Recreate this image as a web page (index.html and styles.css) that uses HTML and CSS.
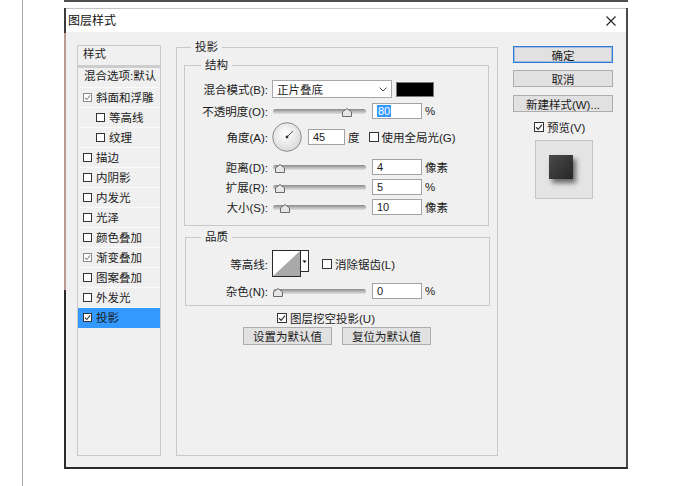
FILE: index.html
```html
<!DOCTYPE html>
<html lang="zh-CN">
<head>
<meta charset="utf-8">
<title>图层样式</title>
<link rel="stylesheet" href="styles.css">
</head>
<body>
<div class="page">
  <div class="rule"></div>
  <div class="window">
    <div class="topline"></div>
    <div class="frame">
      <div class="dialog">
        <div class="titlebar">
          <span class="title">图层样式</span>
          <svg class="close" width="10" height="10" viewBox="0 0 10 10"><path d="M0.5 0.5 L9.5 9.5 M9.5 0.5 L0.5 9.5" stroke="#222" stroke-width="1.1"/></svg>
        </div>
        <div class="body">
          <div class="list">
            <div class="list-head">样式</div>
            <div class="list-blend">混合选项:默认</div>
            <div class="item"><span class="cb cb-dis"><svg width="7" height="7" viewBox="0 0 8 8"><path d="M1 4.2 L3.2 6.3 L7 1.6" fill="none" stroke="#8a8a8a" stroke-width="1.2"/></svg></span>斜面和浮雕</div>
            <div class="item sub"><span class="cb"></span>等高线</div>
            <div class="item sub"><span class="cb"></span>纹理</div>
            <div class="item"><span class="cb"></span>描边</div>
            <div class="item"><span class="cb"></span>内阴影</div>
            <div class="item"><span class="cb"></span>内发光</div>
            <div class="item"><span class="cb"></span>光泽</div>
            <div class="item"><span class="cb"></span>颜色叠加</div>
            <div class="item"><span class="cb cb-dis"><svg width="7" height="7" viewBox="0 0 8 8"><path d="M1 4.2 L3.2 6.3 L7 1.6" fill="none" stroke="#8a8a8a" stroke-width="1.2"/></svg></span>渐变叠加</div>
            <div class="item"><span class="cb"></span>图案叠加</div>
            <div class="item"><span class="cb"></span>外发光</div>
            <div class="item selected"><span class="cb"><svg width="7" height="7" viewBox="0 0 8 8"><path d="M1 4.2 L3.2 6.3 L7 1.6" fill="none" stroke="#333" stroke-width="1.2"/></svg></span>投影</div>
          </div>

          <div class="group outer">
            <div class="legend">投影</div>

            <div class="group struct">
              <div class="legend">结构</div>
              <div class="row r-blend">
                <span class="label">混合模式(B):</span>
                <div class="select"><span>正片叠底</span><svg width="8" height="5" viewBox="0 0 8 5"><path d="M0.5 0.5 L4 4 L7.5 0.5" fill="none" stroke="#555"/></svg></div>
                <span class="swatch"></span>
              </div>
              <div class="row r-opacity">
                <span class="label">不透明度(O):</span>
                <div class="slider"><span class="track"></span><svg class="thumb" style="left:70px" width="10" height="9" viewBox="0 0 10 9"><path d="M0.5 4 L5 0.5 L9.5 4 V8.5 H0.5 Z" fill="#e6e6e6" stroke="#6a6a6a"/></svg></div>
                <span class="input"><span class="sel">80</span></span>
                <span class="unit">%</span>
              </div>
              <div class="row r-angle">
                <span class="label">角度(A):</span>
                <svg class="dial" width="30" height="30" viewBox="0 0 30 30"><defs><radialGradient id="dg" cx="45%" cy="40%" r="60%"><stop offset="0" stop-color="#ffffff"/><stop offset="1" stop-color="#dadada"/></radialGradient></defs><circle cx="15" cy="15" r="14.3" fill="url(#dg)" stroke="#8c8c8c"/><line x1="15" y1="15" x2="21" y2="9" stroke="#555" stroke-width="1"/><circle cx="15" cy="15" r="1.4" fill="#333"/></svg>
                <span class="input short">45</span>
                <span class="unit">度</span>
                <span class="check global"><span class="cb cb10"></span>使用全局光(G)</span>
              </div>
              <div class="row r-dist">
                <span class="label">距离(D):</span>
                <div class="slider"><span class="track"></span><svg class="thumb" style="left:3px" width="10" height="9" viewBox="0 0 10 9"><path d="M0.5 4 L5 0.5 L9.5 4 V8.5 H0.5 Z" fill="#e6e6e6" stroke="#6a6a6a"/></svg></div>
                <span class="input">4</span>
                <span class="unit">像素</span>
              </div>
              <div class="row r-next">
                <span class="label">扩展(R):</span>
                <div class="slider"><span class="track"></span><svg class="thumb" style="left:3px" width="10" height="9" viewBox="0 0 10 9"><path d="M0.5 4 L5 0.5 L9.5 4 V8.5 H0.5 Z" fill="#e6e6e6" stroke="#6a6a6a"/></svg></div>
                <span class="input">5</span>
                <span class="unit">%</span>
              </div>
              <div class="row r-next">
                <span class="label">大小(S):</span>
                <div class="slider"><span class="track"></span><svg class="thumb" style="left:8px" width="10" height="9" viewBox="0 0 10 9"><path d="M0.5 4 L5 0.5 L9.5 4 V8.5 H0.5 Z" fill="#e6e6e6" stroke="#6a6a6a"/></svg></div>
                <span class="input">10</span>
                <span class="unit">像素</span>
              </div>
            </div>

            <div class="group quality">
              <div class="legend">品质</div>
              <div class="row r-contour">
                <span class="label">等高线:</span>
                <svg class="contour" width="37" height="27" viewBox="0 0 37 27"><rect x="0.5" y="0.5" width="28" height="26" fill="#fff" stroke="#2a2a2a"/><polygon points="1,26 28,1 28,26" fill="#a9a9a9"/><rect x="28.5" y="0.5" width="8" height="21" fill="#fff" stroke="#2a2a2a"/><polygon points="30.5,10.5 34.5,10.5 32.5,13" fill="#000"/></svg>
                <span class="check aa"><span class="cb cb10"></span>消除锯齿(L)</span>
              </div>
              <div class="row r-noise">
                <span class="label">杂色(N):</span>
                <div class="slider"><span class="track"></span><svg class="thumb" style="left:1px" width="10" height="9" viewBox="0 0 10 9"><path d="M0.5 4 L5 0.5 L9.5 4 V8.5 H0.5 Z" fill="#e6e6e6" stroke="#6a6a6a"/></svg></div>
                <span class="input">0</span>
                <span class="unit">%</span>
              </div>
            </div>

            <div class="check knockout"><span class="cb cb10"><svg width="8" height="8" viewBox="0 0 8 8"><path d="M1 4.2 L3.2 6.3 L7 1.6" fill="none" stroke="#333" stroke-width="1.2"/></svg></span>图层挖空投影(U)</div>
            <div class="defaults">
              <span class="btn wide">设置为默认值</span>
              <span class="btn wide">复位为默认值</span>
            </div>
          </div>

          <div class="actions">
            <span class="btn primary">确定</span>
            <span class="btn cancel">取消</span>
            <span class="btn newstyle">新建样式(W)...</span>
            <span class="check preview-check"><span class="cb cb10"><svg width="8" height="8" viewBox="0 0 8 8"><path d="M1 4.2 L3.2 6.3 L7 1.6" fill="none" stroke="#333" stroke-width="1.2"/></svg></span>预览(V)</span>
            <div class="preview"><div class="shape"></div></div>
          </div>
        </div>
      </div>
    </div>
  </div>
</div>
</body>
</html>
```
FILE: styles.css
```css
* { box-sizing: border-box; }
html, body { margin: 0; padding: 0; }
body {
  background: #fff;
  width: 690px;
  height: 486px;
  overflow: hidden;
  font-family: "Liberation Sans", "Noto Sans CJK SC", sans-serif;
  font-size: 11.5px;
  color: #1b1b1b;
}
.page { display: flex; height: 486px; }
.rule { margin-left: 22px; width: 1px; background: #a9a9a9; flex: none; }
.window { margin-left: 41px; width: 564px; flex: none; }
.topline { height: 2px; background: #4f4f4f; }
.frame {
  margin-top: 6px;
  padding: 0 0 2px 2px;
  background: linear-gradient(to bottom, #3b3b3b 0, #3b3b3b 25px, #bb9b92 25px, #bb9b92 282px, #2b2b2b 282px);
}
.dialog { background: #f0f0f0; border-right: 2px solid #4a4a4a; }
.titlebar {
  height: 24px;
  background: #fff;
  border-top: 1px solid #c4c4c4;
  display: flex;
  align-items: center;
  justify-content: space-between;
  padding: 0 10px 0 2px;
  font-size: 12px;
  color: #111;
}
.title { line-height: 16px; }
.body {
  display: flex;
  align-items: flex-start;
  height: 435px;
  padding: 13px 0 0 11px;
}

/* style list */
.list {
  width: 84px;
  height: 411px;
  border: 1px solid #c9c9c9;
  flex: none;
}
.list-head {
  height: 22px;
  border-bottom: 3px solid #cdcdcd;
  padding: 1px 0 0 5px;
  line-height: 14px;
}
.list-blend {
  height: 20px;
  border-bottom: 1px solid #fbfbfb;
  padding: 1px 0 0 6px;
  line-height: 14px;
  white-space: nowrap;
}
.item {
  height: 20px;
  border-bottom: 1px solid #fbfbfb;
  display: flex;
  align-items: center;
  padding-left: 5px;
  line-height: 14px;
  white-space: nowrap;
}
.item.sub { padding-left: 18px; }
.item.selected { background: #3399ff; border-bottom-color: #3399ff; }
.cb {
  width: 9px;
  height: 9px;
  border: 1px solid #333;
  background: #fff;
  margin-right: 4px;
  flex: none;
  display: inline-flex;
  align-items: center;
  justify-content: center;
}
.cb-dis { border-color: #8a8a8a; }
.cb10 { width: 10px; height: 10px; margin-right: 3px; }

/* group boxes */
.group { border: 1px solid #c9c9c9; }
.legend {
  width: max-content;
  height: 14px;
  line-height: 14px;
  margin-top: -8px;
  padding: 0 4px;
  background: #f0f0f0;
}
.outer {
  margin: 2px 0 0 15px;
  width: 322px;
  height: 409px;
  flex: none;
}
.outer > .legend { margin-left: 14px; }
.struct { margin: 11px 0 0 7px; width: 305px; height: 161px; }
.struct > .legend { margin-left: 16px; }
.quality { margin: 11px 0 0 8px; width: 305px; height: 69px; }
.quality > .legend { margin-left: 15px; }

.row { display: flex; align-items: center; white-space: nowrap; }
.label { width: 83px; text-align: right; margin-right: 4px; flex: none; }
.quality .label { width: 82px; }
.r-blend { height: 18px; margin-top: 8px; }
.r-opacity { height: 18px; margin-top: 4px; }
.r-angle { height: 30px; margin-top: 2px; }
.r-dist { height: 18px; margin-top: 6px; }
.r-next { height: 18px; margin-top: 2px; }
.r-contour { height: 27px; margin-top: 6px; }
.r-noise { height: 18px; margin-top: 5px; }

.select {
  width: 120px;
  height: 18px;
  background: #fff;
  border: 1px solid #a7a7a7;
  display: flex;
  align-items: center;
  justify-content: space-between;
  padding: 0 4px 0 4px;
  flex: none;
}
.swatch {
  width: 38px;
  height: 15px;
  background: #000;
  border: 1px solid #7a7a7a;
  margin-left: 4px;
  flex: none;
}
.slider {
  width: 94px;
  height: 18px;
  position: relative;
  flex: none;
  margin-right: 6px;
}
.track {
  display: block;
  margin: 7px 0 0 1px;
  width: 93px;
  height: 5px;
  border-radius: 3px;
  background: linear-gradient(#8a8a8a, #bdbdbd 55%, #e0e0e0);
}
.thumb { position: absolute; top: 6px; }
.input {
  width: 50px;
  height: 16px;
  background: #fff;
  border: 1px solid #a3a3a3;
  padding-left: 4px;
  font-size: 11px;
  line-height: 12px;
  display: flex;
  align-items: center;
  flex: none;
}
.input.short { width: 37px; }
.sel { background: #3399ff; color: #fff; padding: 0 1px; }
.unit { margin-left: 3px; }
.dial { margin-right: 6px; flex: none; }
.check { display: flex; align-items: center; white-space: nowrap; }
.global { margin-left: 9px; }
.contour { flex: none; }
.aa { margin-left: 13px; }
.knockout { margin: 5px 0 0 100px; height: 14px; }
.defaults { display: flex; justify-content: center; gap: 10px; margin-top: 2px; }

.btn {
  height: 18px;
  background: #e1e1e1;
  border: 1px solid #adadad;
  display: flex;
  align-items: center;
  justify-content: center;
  white-space: nowrap;
}
.btn.wide { width: 89px; }

/* right column */
.actions {
  margin: 1px 0 0 15px;
  width: 100px;
  flex: none;
  display: flex;
  flex-direction: column;
}
.actions .btn { height: 17px; }
.primary { border-color: #2d7bd3; box-shadow: inset 0 0 0 1px rgba(45, 123, 211, 0.35); }
.cancel { margin-top: 7px; }
.newstyle { margin-top: 8px; }
.preview-check { margin-top: 9px; height: 12px; padding-left: 21px; }
.preview {
  margin: 7px 0 0 22px;
  width: 58px;
  height: 59px;
  border: 1px solid #c4c4c4;
  background: #e4e4e4;
  padding: 14px 0 0 13px;
}
.shape {
  width: 24px;
  height: 24px;
  background: linear-gradient(135deg, #4a4a4a, #262626);
  box-shadow: 3px 4px 5px rgba(0, 0, 0, 0.55);
}
```
